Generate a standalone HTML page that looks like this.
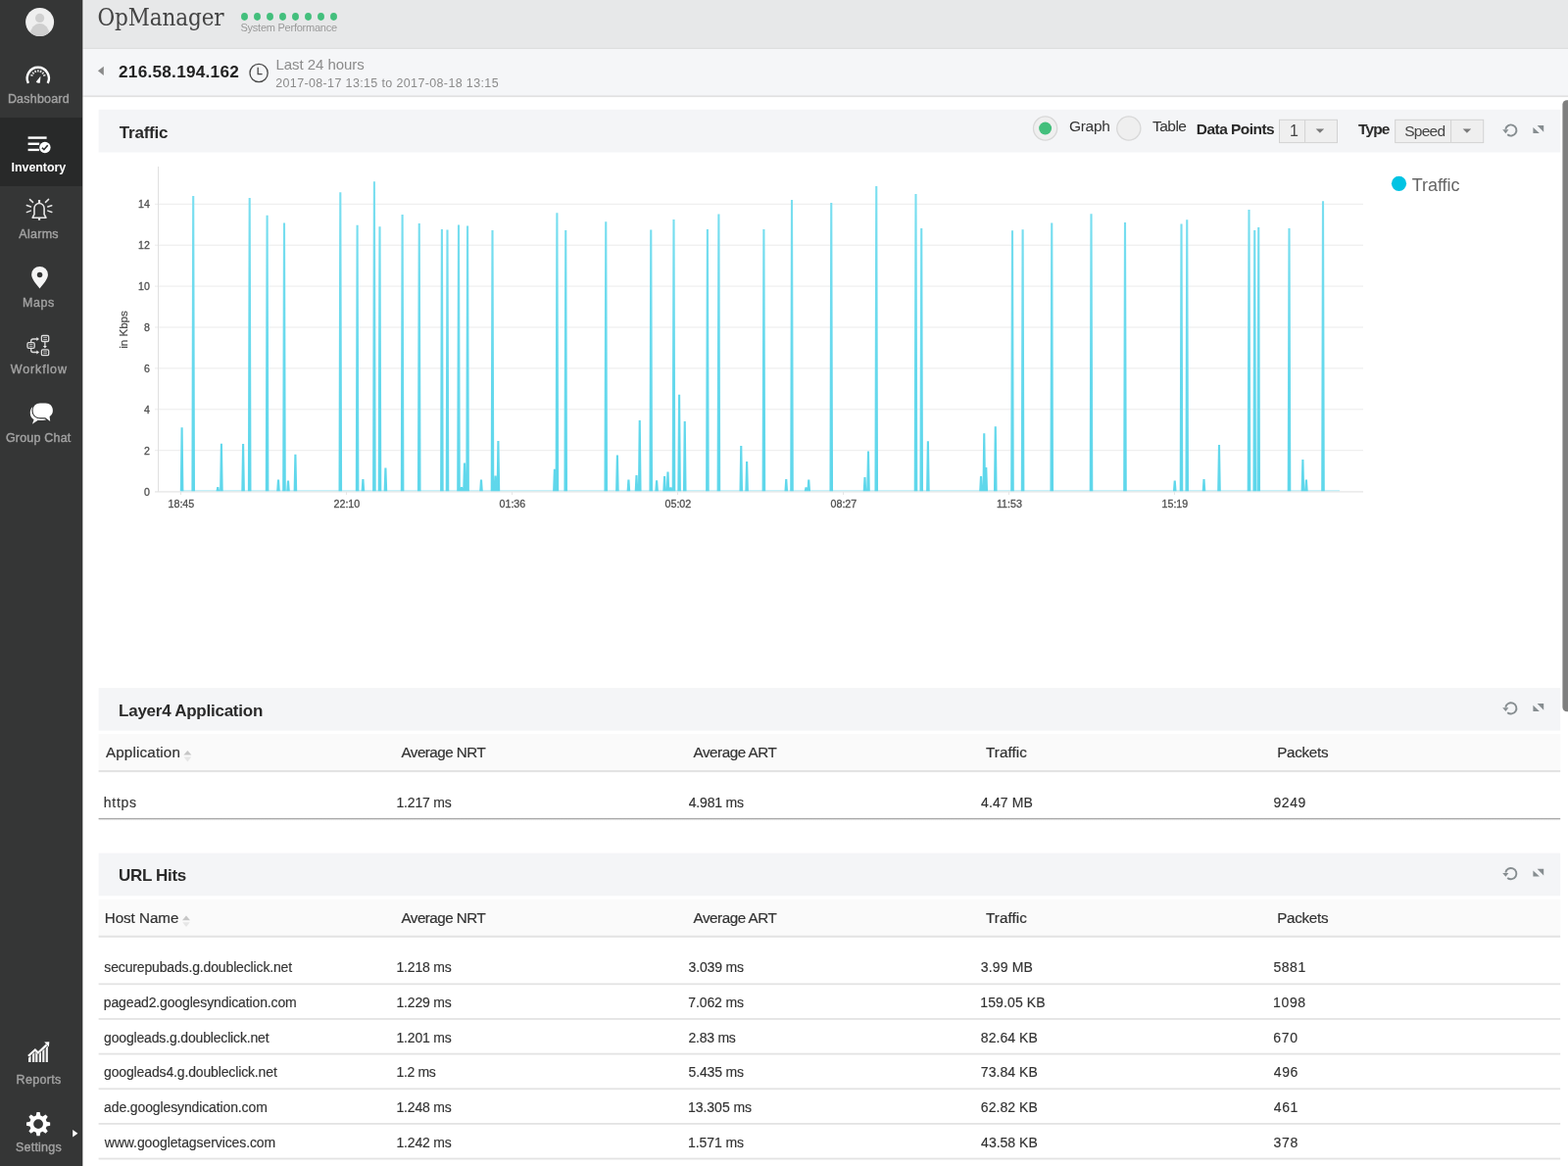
<!DOCTYPE html>
<html lang="en"><head><meta charset="utf-8"><title>OpManager</title>
<style>
*{box-sizing:border-box;margin:0;padding:0}
html,body{width:1600px;height:1190px;overflow:hidden;background:#fff}
body{will-change:transform;font-family:"Liberation Sans",Arial,sans-serif;color:#333;position:relative}
.abs{position:absolute;white-space:nowrap;line-height:1}
#side{position:absolute;left:0;top:0;width:84px;height:1190px;background:#353636}
#side .act{position:absolute;left:0;top:120px;width:84px;height:69.5px;background:#282929}

</style></head>
<body>
<div id="side">
  <div class="act"></div>
  <svg width="84" height="1190" viewBox="0 0 84 1190" style="position:absolute;left:0;top:0">
<defs><clipPath id="avc"><circle cx="40.6" cy="22.5" r="14.5"/></clipPath>
<clipPath id="repc"><polygon points="27,1085 27,1081.4 35.9,1073.6 38.9,1076.6 50,1066.6 50,1085"/></clipPath></defs>
<!-- avatar -->
<circle cx="40.6" cy="22.5" r="14.5" fill="#efefef"/>
<g clip-path="url(#avc)" fill="#cfcfcf"><circle cx="40.6" cy="18.4" r="4.6"/><ellipse cx="40.6" cy="35.5" rx="9.8" ry="11.5"/></g>
<!-- dashboard -->
<g fill="none" stroke="#fff" stroke-linecap="butt">
<path d="M28.9 84.9A11.1 11.1 0 1 1 48.7 84.9" stroke-width="2.5"/>
<g stroke="#dcdcdc" stroke-width="1.6"><path d="M33.56 77.33L31.29 76.55M34.73 75.35L32.97 73.73M36.60 74.02L35.64 71.82M38.85 73.55L38.85 71.15M41.10 74.02L42.06 71.82M42.97 75.35L44.73 73.73M44.14 77.33L46.41 76.55"/></g></g>
<path d="M36.8 83.6L41.4 77.8L40.9 84.4Q38.6 85.6 36.8 83.6Z" fill="#fff"/>
<!-- inventory -->
<g fill="#fff"><rect x="28.6" y="139.4" width="19" height="2.4"/><rect x="28.6" y="145.6" width="11.6" height="2.4"/><rect x="28.6" y="151.8" width="11.4" height="2.3"/>
<circle cx="45.9" cy="150.5" r="6.4" fill="#282929"/><circle cx="45.9" cy="150.5" r="5.7"/></g>
<path d="M42.9 150.7L44.9 152.7L48.7 148.3" fill="none" stroke="#282929" stroke-width="1.6"/>
<!-- alarms -->
<g fill="none" stroke="#e6e6e6" stroke-width="1.6">
<path d="M33.2 222.2L35 218.6L35 212.6A5.05 5.05 0 0 1 45.1 212.6L45.1 218.6L46.9 222.2Z" stroke-linejoin="round"/>
<path d="M40.05 203.9V207M40.05 223V224.8" stroke-width="2.2"/>
<g stroke-linecap="round" stroke-width="1.5"><path d="M30.5 203.6L33.5 206.4M49.6 203.4L46.5 206.4M27.3 209.5L31.4 211M52.8 209.7L48.8 211M27.3 216.6L31.3 215.1M52.8 216.5L48.8 215.1"/></g>
</g>
<!-- maps -->
<path d="M40.55 271.9A8.4 8.4 0 0 1 48.95 280.3C48.95 285 44 290 40.55 294.5C37.1 290 32.15 285 32.15 280.3A8.4 8.4 0 0 1 40.55 271.9Z" fill="#f5f5f5"/>
<circle cx="40.55" cy="280.45" r="2.75" fill="#353636"/>
<!-- workflow -->
<g fill="none" stroke="#ddd" stroke-width="1.3">
<rect x="42.4" y="342.5" width="7.3" height="6" rx="1.2"/><rect x="42.4" y="356.8" width="7.3" height="5.8" rx="1.2"/><rect x="28" y="349.7" width="7.2" height="5.6" rx="1.2"/>
<path d="M31.7 349.4V348Q31.7 346 33.7 346H38M31.7 355.6V357.4Q31.7 359.5 33.7 359.5H38M45.9 348.8V353.6"/>
<path d="M44.2 344.6H48M44.2 346.5H48M44.2 358.8H48M44.2 360.6H48M29.8 351.6H33.4M29.8 353.4H33.4" stroke-width="0.9" stroke="#bbb"/>
</g>
<g fill="#e8e8e8"><path d="M37.4 344L40 346L37.4 348Z"/><path d="M37.4 357.5L40 359.5L37.4 361.5Z"/><path d="M43.9 353L47.9 353L45.9 355.6Z"/></g>
<!-- group chat -->
<g fill="#fff">
<path d="M30.8 421.5C30.8 417 33 414.6 36 414.6L46 414.6C49 414.6 51.2 417.5 51.2 421.5C51.2 426 48 428.9 44 428.9L38.5 428.9L33 432.8L34.6 428.2C32.2 427 30.8 424.6 30.8 421.5Z"/>
<path d="M41 411.5L46.5 411.5C51 411.5 53.9 414.6 53.9 418.9C53.9 421.6 52.7 423.8 50.6 425.1L51.2 429.9L46.2 426.3L41 426.3C36.5 426.3 33.6 423.2 33.6 418.9C33.6 414.6 36.5 411.5 41 411.5Z" stroke="#353636" stroke-width="2.4"/>
<path d="M41 411.5L46.5 411.5C51 411.5 53.9 414.6 53.9 418.9C53.9 421.6 52.7 423.8 50.6 425.1L51.2 429.9L46.2 426.3L41 426.3C36.5 426.3 33.6 423.2 33.6 418.9C33.6 414.6 36.5 411.5 41 411.5Z"/>
</g>
<!-- reports -->
<path d="M28.9 1077.8L35.9 1071.5L38.9 1074.5L47.6 1066.4" fill="none" stroke="#fff" stroke-width="2.2" stroke-linejoin="miter"/>
<path d="M45.2 1063.6L50.3 1063.2L49.9 1068.4Z" fill="#fff"/>
<g fill="#f2f2f2" clip-path="url(#repc)"><rect x="29" y="1060" width="2.6" height="24"/><rect x="33" y="1060" width="2.3" height="24"/><rect x="36.2" y="1060" width="2.2" height="24"/><rect x="39.8" y="1060" width="2.2" height="24"/><rect x="43.2" y="1060" width="2.2" height="24"/><rect x="46.7" y="1060" width="2.2" height="24"/></g>
<!-- settings -->
<path id="gear" fill="#fff" fill-rule="evenodd" d="M36.78 1138.50L37.49 1135.00L40.65 1135.00L41.36 1138.50L43.53 1139.40L46.51 1137.43L48.74 1139.66L46.77 1142.64L47.67 1144.81L51.17 1145.52L51.17 1148.68L47.67 1149.39L46.77 1151.56L48.74 1154.54L46.51 1156.77L43.53 1154.80L41.36 1155.70L40.65 1159.20L37.49 1159.20L36.78 1155.70L34.61 1154.80L31.63 1156.77L29.40 1154.54L31.37 1151.56L30.47 1149.39L26.97 1148.68L26.97 1145.52L30.47 1144.81L31.37 1142.64L29.40 1139.66L31.63 1137.43L34.61 1139.40ZM34.17 1147.10a4.9 4.9 0 1 0 9.8 0a4.9 4.9 0 1 0 -9.8 0Z"/>
<path d="M74.2 1152.9L79.4 1156.7L74.2 1160.6Z" fill="#fff"/>
</svg>

</div>
<svg width="1516" height="1190" viewBox="84 0 1516 1190" style="position:absolute;left:84px;top:0">
<defs><linearGradient id="dk" x1="0" y1="0" x2="0" y2="1"><stop offset="0" stop-color="#a4a4a4"/><stop offset="0.45" stop-color="#aaaaaa"/><stop offset="0.6" stop-color="#dedede"/><stop offset="1" stop-color="#e6e6e6"/></linearGradient></defs>
<rect x="84" y="0" width="1516" height="49" fill="#e7e8e9"/>
<rect x="84" y="48.8" width="1516" height="1.2" fill="#dedfdf"/>
<rect x="84" y="50" width="1516" height="47.3" fill="#f5f6f8"/>
<rect x="84" y="97.3" width="1516" height="1.8" fill="#e1e1e1"/>
<rect x="100.6" y="111.8" width="1491.6" height="43.70" fill="#f4f5f7"/>
<rect x="100.6" y="702.1" width="1491.6" height="43.50" fill="#f4f5f7"/>
<rect x="100.6" y="870.6" width="1491.6" height="43.70" fill="#f4f5f7"/>
<rect x="100.6" y="749.0" width="1491.6" height="37.00" fill="#fafafa"/>
<rect x="100.6" y="786.0" width="1491.6" height="2.1" fill="#e3e3e3"/>
<rect x="100.6" y="917.7" width="1491.6" height="37.00" fill="#fafafa"/>
<rect x="100.6" y="954.7" width="1491.6" height="2.1" fill="#e3e3e3"/>
<rect x="100.6" y="834.9" width="1491.6" height="2.2" fill="url(#dk)"/>
<rect x="100.6" y="1003.40" width="1491.6" height="1.8" fill="#e3e3e3"/>
<rect x="100.6" y="1039.05" width="1491.6" height="1.8" fill="#e3e3e3"/>
<rect x="100.6" y="1074.70" width="1491.6" height="1.8" fill="#e3e3e3"/>
<rect x="100.6" y="1110.35" width="1491.6" height="1.8" fill="#e3e3e3"/>
<rect x="100.6" y="1146.00" width="1491.6" height="1.8" fill="#e3e3e3"/>
<rect x="100.6" y="1181.65" width="1491.6" height="1.8" fill="#e3e3e3"/>
<rect x="84.3" y="0" width="1.3" height="99" fill="#fff" fill-opacity="0.4"/>
<rect x="84" y="0" width="0.35" height="1190" fill="#353636"/>
<rect x="1594.4" y="102.2" width="12" height="624" rx="4.5" fill="#7f7f7f"/>
</svg>
<svg width="1600" height="1190" viewBox="0 0 1600 1190" style="position:absolute;left:0;top:0">
<!-- green dots -->
<g fill="#43bf7c">
<rect x="246.05" y="12.9" width="6.9" height="8" rx="3.45" ry="3.8"/><rect x="259.05" y="12.9" width="6.9" height="8" rx="3.45" ry="3.8"/><rect x="272.05" y="12.9" width="6.9" height="8" rx="3.45" ry="3.8"/><rect x="285.05" y="12.9" width="6.9" height="8" rx="3.45" ry="3.8"/><rect x="298.05" y="12.9" width="6.9" height="8" rx="3.45" ry="3.8"/><rect x="311.05" y="12.9" width="6.9" height="8" rx="3.45" ry="3.8"/><rect x="324.05" y="12.9" width="6.9" height="8" rx="3.45" ry="3.8"/><rect x="337.05" y="12.9" width="6.9" height="8" rx="3.45" ry="3.8"/>
</g>
<!-- back arrow -->
<path d="M99.9 72.3L105.8 67.7V76.9Z" fill="#8a8a8a"/>
<!-- clock -->
<circle cx="264.1" cy="74.5" r="9.1" fill="none" stroke="#4a4a4a" stroke-width="1.3"/>
<path d="M263.2 68.8V75.6H267.6" fill="none" stroke="#4a4a4a" stroke-width="1.3"/>
<!-- radios -->
<circle cx="1066.6" cy="131" r="12.1" fill="#efefef" stroke="#d8d8d8" stroke-width="1.3"/>
<circle cx="1066.6" cy="131" r="6.5" fill="#43bf7c"/>
<circle cx="1151.8" cy="131" r="12.1" fill="#efefef" stroke="#d8d8d8" stroke-width="1.3"/>
<!-- selects -->
<g fill="#efefef" stroke="#d2d2d2" stroke-width="1">
<rect x="1305.5" y="122.3" width="59" height="23.3"/>
<rect x="1423.7" y="122.3" width="90" height="23.3"/>
</g>
<path d="M1331.6 122.3V145.6M1480.6 122.3V145.6" stroke="#d2d2d2" stroke-width="1" fill="none"/>
<path d="M1342.6 131.4H1351.2L1346.9 135.8Z M1492.6 131.4H1501.2L1496.9 135.8Z" fill="#7a7a7a"/>
<!-- refresh / expand icons -->
<g>
<path d="M1536.3 131.9A5.6 5.6 0 1 1 1538.2 137.3" fill="none" stroke="#868d90" stroke-width="1.9"/>
<path d="M1533.2 132.3L1539.4 132.3L1536.4 136.2Z" fill="#868d90"/>
<path d="M1568.6 128.1H1575.2V134.8Z M1564.4 129.9V136H1570.9Z" fill="#868d90"/>
</g>
<g transform="translate(0,589.9)">
<path d="M1536.3 131.9A5.6 5.6 0 1 1 1538.2 137.3" fill="none" stroke="#868d90" stroke-width="1.9"/>
<path d="M1533.2 132.3L1539.4 132.3L1536.4 136.2Z" fill="#868d90"/>
<path d="M1568.6 128.1H1575.2V134.8Z M1564.4 129.9V136H1570.9Z" fill="#868d90"/>
</g>
<g transform="translate(0,758.6)">
<path d="M1536.3 131.9A5.6 5.6 0 1 1 1538.2 137.3" fill="none" stroke="#868d90" stroke-width="1.9"/>
<path d="M1533.2 132.3L1539.4 132.3L1536.4 136.2Z" fill="#868d90"/>
<path d="M1568.6 128.1H1575.2V134.8Z M1564.4 129.9V136H1570.9Z" fill="#868d90"/>
</g>
<!-- sort icons -->
<g fill="#c6c6c6"><path d="M187.4 770.6L191.4 765.9L195.4 770.6Z"/><path d="M187.6 772.6L191.4 777.4L195.2 772.6Z" fill="#e6e6e6"/></g>
<g fill="#c6c6c6" transform="translate(-1.4,168.7)"><path d="M187.4 770.6L191.4 765.9L195.4 770.6Z"/><path d="M187.6 772.6L191.4 777.4L195.2 772.6Z" fill="#e6e6e6"/></g>
</svg>

<svg class="chart" width="1600" height="1190" viewBox="0 0 1600 1190" style="position:absolute;left:0;top:0">
<rect x="158" y="459.20" width="1233" height="1" fill="#ebebeb"/>
<rect x="158" y="417.30" width="1233" height="1" fill="#ebebeb"/>
<rect x="158" y="375.40" width="1233" height="1" fill="#ebebeb"/>
<rect x="158" y="333.50" width="1233" height="1" fill="#ebebeb"/>
<rect x="158" y="291.60" width="1233" height="1" fill="#ebebeb"/>
<rect x="158" y="249.70" width="1233" height="1" fill="#ebebeb"/>
<rect x="158" y="207.80" width="1233" height="1" fill="#ebebeb"/>
<rect x="161" y="170" width="1" height="332" fill="#e0e0e0"/>
<rect x="158" y="501.3" width="1233" height="1.2" fill="#e4e4e4"/>
<rect x="184.0" y="502" width="1" height="3" fill="#e6e6e6"/>
<rect x="353.0" y="502" width="1" height="3" fill="#e6e6e6"/>
<rect x="522.0" y="502" width="1" height="3" fill="#e6e6e6"/>
<rect x="691.0" y="502" width="1" height="3" fill="#e6e6e6"/>
<rect x="860.0" y="502" width="1" height="3" fill="#e6e6e6"/>
<rect x="1029.0" y="502" width="1" height="3" fill="#e6e6e6"/>
<rect x="1198.0" y="502" width="1" height="3" fill="#e6e6e6"/>
<rect x="185" y="500.34999999999997" width="1182" height="0.85" fill="#a8e9f4"/>
<defs><linearGradient id="sg" gradientUnits="userSpaceOnUse" x1="0" y1="185" x2="0" y2="501"><stop offset="0" stop-color="#7cdff0"/><stop offset="0.6" stop-color="#66d9ed"/><stop offset="1" stop-color="#5fd7eb"/></linearGradient></defs>
<path d="M183.80 501.2L184.55 436.30L186.65 436.30L187.40 501.2ZM195.40 501.2L196.15 200.00L198.25 200.00L199.00 501.2ZM220.50 501.2L221.25 497.00L223.35 497.00L224.10 501.2ZM224.10 501.2L224.85 452.80L226.95 452.80L227.70 501.2ZM246.30 501.2L247.05 453.00L249.15 453.00L249.90 501.2ZM252.90 501.2L253.65 201.90L255.75 201.90L256.50 501.2ZM270.80 501.2L271.55 219.75L273.65 219.75L274.40 501.2ZM282.20 501.2L282.95 489.40L285.05 489.40L285.80 501.2ZM288.20 501.2L288.95 227.50L291.05 227.50L291.80 501.2ZM292.20 501.2L292.95 490.60L295.05 490.60L295.80 501.2ZM299.60 501.2L300.35 463.75L302.45 463.75L303.20 501.2ZM345.50 501.2L346.25 196.25L348.35 196.25L349.10 501.2ZM362.80 501.2L363.55 229.75L365.65 229.75L366.40 501.2ZM368.60 501.2L369.35 489.00L371.45 489.00L372.20 501.2ZM380.10 501.2L380.85 185.25L382.95 185.25L383.70 501.2ZM385.70 501.2L386.45 231.25L388.55 231.25L389.30 501.2ZM391.60 501.2L392.35 477.50L394.45 477.50L395.20 501.2ZM408.80 501.2L409.55 219.00L411.65 219.00L412.40 501.2ZM425.95 501.2L426.70 228.10L428.80 228.10L429.55 501.2ZM449.10 501.2L449.85 234.10L451.95 234.10L452.70 501.2ZM454.70 501.2L455.45 234.40L457.55 234.40L458.30 501.2ZM466.20 501.2L466.95 229.40L469.05 229.40L469.80 501.2ZM469.20 501.2L469.95 496.90L472.05 496.90L472.80 501.2ZM472.20 501.2L472.95 472.50L475.05 472.50L475.80 501.2ZM475.30 501.2L476.05 230.40L478.15 230.40L478.90 501.2ZM489.20 501.2L489.95 489.40L492.05 489.40L492.80 501.2ZM500.70 501.2L501.45 235.00L503.55 235.00L504.30 501.2ZM503.80 501.2L504.55 485.60L506.65 485.60L507.40 501.2ZM506.60 501.2L507.35 450.00L509.45 450.00L510.20 501.2ZM564.10 501.2L564.85 478.75L566.95 478.75L567.70 501.2ZM566.60 501.2L567.35 217.25L569.45 217.25L570.20 501.2ZM575.45 501.2L576.20 235.00L578.30 235.00L579.05 501.2ZM616.45 501.2L617.20 226.25L619.30 226.25L620.05 501.2ZM628.10 501.2L628.85 464.40L630.95 464.40L631.70 501.2ZM639.60 501.2L640.35 489.40L642.45 489.40L643.20 501.2ZM647.70 501.2L648.45 485.00L650.55 485.00L651.30 501.2ZM650.95 501.2L651.70 429.10L653.80 429.10L654.55 501.2ZM662.45 501.2L663.20 234.60L665.30 234.60L666.05 501.2ZM668.30 501.2L669.05 490.25L671.15 490.25L671.90 501.2ZM676.30 501.2L677.05 486.00L679.15 486.00L679.90 501.2ZM679.70 501.2L680.45 481.50L682.55 481.50L683.30 501.2ZM682.60 501.2L683.35 497.25L685.45 497.25L686.20 501.2ZM685.70 501.2L686.45 224.00L688.55 224.00L689.30 501.2ZM691.30 501.2L692.05 402.75L694.15 402.75L694.90 501.2ZM696.95 501.2L697.70 430.00L699.80 430.00L700.55 501.2ZM720.10 501.2L720.85 234.10L722.95 234.10L723.70 501.2ZM731.60 501.2L732.35 218.50L734.45 218.50L735.20 501.2ZM754.45 501.2L755.20 455.00L757.30 455.00L758.05 501.2ZM760.30 501.2L761.05 471.00L763.15 471.00L763.90 501.2ZM777.60 501.2L778.35 234.00L780.45 234.00L781.20 501.2ZM800.45 501.2L801.20 489.00L803.30 489.00L804.05 501.2ZM806.20 501.2L806.95 204.00L809.05 204.00L809.80 501.2ZM820.70 501.2L821.45 497.25L823.55 497.25L824.30 501.2ZM823.45 501.2L824.20 489.40L826.30 489.40L827.05 501.2ZM846.45 501.2L847.20 206.90L849.30 206.90L850.05 501.2ZM880.70 501.2L881.45 487.10L883.55 487.10L884.30 501.2ZM884.20 501.2L884.95 460.40L887.05 460.40L887.80 501.2ZM892.45 501.2L893.20 190.00L895.30 190.00L896.05 501.2ZM932.70 501.2L933.45 198.10L935.55 198.10L936.30 501.2ZM938.45 501.2L939.20 232.90L941.30 232.90L942.05 501.2ZM945.10 501.2L945.85 450.25L947.95 450.25L948.70 501.2ZM999.20 501.2L999.95 486.00L1002.05 486.00L1002.80 501.2ZM1002.45 501.2L1003.20 442.25L1005.30 442.25L1006.05 501.2ZM1004.45 501.2L1005.20 476.90L1007.30 476.90L1008.05 501.2ZM1013.95 501.2L1014.70 435.25L1016.80 435.25L1017.55 501.2ZM1031.20 501.2L1031.95 235.25L1034.05 235.25L1034.80 501.2ZM1041.80 501.2L1042.55 234.25L1044.65 234.25L1045.40 501.2ZM1071.45 501.2L1072.20 227.50L1074.30 227.50L1075.05 501.2ZM1111.70 501.2L1112.45 218.25L1114.55 218.25L1115.30 501.2ZM1146.20 501.2L1146.95 227.10L1149.05 227.10L1149.80 501.2ZM1196.95 501.2L1197.70 490.60L1199.80 490.60L1200.55 501.2ZM1203.70 501.2L1204.45 228.50L1206.55 228.50L1207.30 501.2ZM1209.45 501.2L1210.20 224.25L1212.30 224.25L1213.05 501.2ZM1226.70 501.2L1227.45 489.00L1229.55 489.00L1230.30 501.2ZM1242.20 501.2L1242.95 454.00L1245.05 454.00L1245.80 501.2ZM1272.70 501.2L1273.45 214.00L1275.55 214.00L1276.30 501.2ZM1278.45 501.2L1279.20 235.10L1281.30 235.10L1282.05 501.2ZM1282.45 501.2L1283.20 232.10L1285.30 232.10L1286.05 501.2ZM1313.70 501.2L1314.45 232.90L1316.55 232.90L1317.30 501.2ZM1327.60 501.2L1328.35 469.10L1330.45 469.10L1331.20 501.2ZM1331.10 501.2L1331.85 489.40L1333.95 489.40L1334.70 501.2ZM1348.20 501.2L1348.95 205.25L1351.05 205.25L1351.80 501.2Z" fill="url(#sg)"/>
<text x="152.8" y="505.5" text-anchor="end" font-family='"Liberation Sans",Arial,sans-serif' font-size="10.6" fill="#505050" stroke="#505050" stroke-width="0.3">0</text>
<text x="152.8" y="463.6" text-anchor="end" font-family='"Liberation Sans",Arial,sans-serif' font-size="10.6" fill="#505050" stroke="#505050" stroke-width="0.3">2</text>
<text x="152.8" y="421.7" text-anchor="end" font-family='"Liberation Sans",Arial,sans-serif' font-size="10.6" fill="#505050" stroke="#505050" stroke-width="0.3">4</text>
<text x="152.8" y="379.8" text-anchor="end" font-family='"Liberation Sans",Arial,sans-serif' font-size="10.6" fill="#505050" stroke="#505050" stroke-width="0.3">6</text>
<text x="152.8" y="337.9" text-anchor="end" font-family='"Liberation Sans",Arial,sans-serif' font-size="10.6" fill="#505050" stroke="#505050" stroke-width="0.3">8</text>
<text x="152.8" y="296.0" text-anchor="end" font-family='"Liberation Sans",Arial,sans-serif' font-size="10.6" fill="#505050" stroke="#505050" stroke-width="0.3">10</text>
<text x="152.8" y="254.1" text-anchor="end" font-family='"Liberation Sans",Arial,sans-serif' font-size="10.6" fill="#505050" stroke="#505050" stroke-width="0.3">12</text>
<text x="152.8" y="212.2" text-anchor="end" font-family='"Liberation Sans",Arial,sans-serif' font-size="10.6" fill="#505050" stroke="#505050" stroke-width="0.3">14</text>
<text x="184.9" y="518" text-anchor="middle" font-family='"Liberation Sans",Arial,sans-serif' font-size="10.7" fill="#505050" stroke="#505050" stroke-width="0.3">18:45</text>
<text x="353.9" y="518" text-anchor="middle" font-family='"Liberation Sans",Arial,sans-serif' font-size="10.7" fill="#505050" stroke="#505050" stroke-width="0.3">22:10</text>
<text x="522.9" y="518" text-anchor="middle" font-family='"Liberation Sans",Arial,sans-serif' font-size="10.7" fill="#505050" stroke="#505050" stroke-width="0.3">01:36</text>
<text x="691.9" y="518" text-anchor="middle" font-family='"Liberation Sans",Arial,sans-serif' font-size="10.7" fill="#505050" stroke="#505050" stroke-width="0.3">05:02</text>
<text x="860.9" y="518" text-anchor="middle" font-family='"Liberation Sans",Arial,sans-serif' font-size="10.7" fill="#505050" stroke="#505050" stroke-width="0.3">08:27</text>
<text x="1029.9" y="518" text-anchor="middle" font-family='"Liberation Sans",Arial,sans-serif' font-size="10.7" fill="#505050" stroke="#505050" stroke-width="0.3">11:53</text>
<text x="1198.9" y="518" text-anchor="middle" font-family='"Liberation Sans",Arial,sans-serif' font-size="10.7" fill="#505050" stroke="#505050" stroke-width="0.3">15:19</text>
<text transform="translate(130.3,336.5) rotate(-90)" text-anchor="middle" font-family='"Liberation Sans",Arial,sans-serif' font-size="11.6" fill="#505050" stroke="#505050" stroke-width="0.25">in Kbps</text>
<circle cx="1427.5" cy="187.3" r="7.6" fill="#00c3e3"/>
</svg>
<div class="abs" id="t_op" style="left:99.40px;top:6px;font-size:24px;letter-spacing:-0.112px;font-family:'DejaVu Serif Condensed','DejaVu Serif','Liberation Serif',serif;color:#444;">OpManager</div>
<div class="abs" id="t_sp" style="left:245.50px;top:23px;font-size:11px;letter-spacing:-0.247px;color:#9a9a9a;">System Performance</div>
<div class="abs" id="t_ip" style="left:121.05px;top:65px;font-size:17.2px;letter-spacing:0.250px;font-weight:bold;color:#222;">216.58.194.162</div>
<div class="abs" id="t_l24" style="left:281.55px;top:58px;font-size:15px;letter-spacing:-0.066px;color:#8b8b8b;">Last 24 hours</div>
<div class="abs" id="t_dt" style="left:281.20px;top:79px;font-size:12.5px;letter-spacing:0.361px;color:#8b8b8b;">2017-08-17 13:15 to 2017-08-18 13:15</div>
<div class="abs" id="s_dash" style="left:7.90px;top:95px;font-size:12.5px;letter-spacing:0.206px;color:#a2a2a2;-webkit-text-stroke:0.4px #a2a2a2;">Dashboard</div>
<div class="abs" id="s_inv" style="left:11.60px;top:165px;font-size:12.5px;letter-spacing:-0.087px;color:#fff;font-weight:bold;">Inventory</div>
<div class="abs" id="s_al" style="left:19.25px;top:233px;font-size:12.5px;letter-spacing:0.290px;color:#a2a2a2;-webkit-text-stroke:0.4px #a2a2a2;">Alarms</div>
<div class="abs" id="s_map" style="left:23.05px;top:303px;font-size:12.5px;letter-spacing:0.583px;color:#a2a2a2;-webkit-text-stroke:0.4px #a2a2a2;">Maps</div>
<div class="abs" id="s_wf" style="left:10.80px;top:371px;font-size:12.5px;letter-spacing:0.850px;color:#a2a2a2;-webkit-text-stroke:0.4px #a2a2a2;">Workflow</div>
<div class="abs" id="s_gc" style="left:5.90px;top:441px;font-size:12.5px;letter-spacing:0.200px;color:#a2a2a2;-webkit-text-stroke:0.4px #a2a2a2;">Group Chat</div>
<div class="abs" id="s_rep" style="left:16.55px;top:1096px;font-size:12.5px;letter-spacing:0.325px;color:#a2a2a2;-webkit-text-stroke:0.4px #a2a2a2;">Reports</div>
<div class="abs" id="s_set" style="left:15.95px;top:1165px;font-size:12.5px;letter-spacing:0.235px;color:#a2a2a2;-webkit-text-stroke:0.4px #a2a2a2;">Settings</div>
<div class="abs" id="p_tr" style="left:121.75px;top:127px;font-size:17px;letter-spacing:-0.208px;font-weight:bold;color:#2a2a2a;">Traffic</div>
<div class="abs" id="p_l4" style="left:121.05px;top:717px;font-size:17px;letter-spacing:-0.250px;font-weight:bold;color:#2a2a2a;">Layer4 Application</div>
<div class="abs" id="p_url" style="left:121.05px;top:885px;font-size:17px;letter-spacing:-0.336px;font-weight:bold;color:#2a2a2a;">URL Hits</div>
<div class="abs" id="c_graph" style="left:1090.90px;top:121px;font-size:15.5px;letter-spacing:-0.262px;color:#333;">Graph</div>
<div class="abs" id="c_table" style="left:1175.95px;top:121px;font-size:15.5px;letter-spacing:-0.500px;color:#333;">Table</div>
<div class="abs" id="c_dp" style="left:1220.85px;top:124px;font-size:15.5px;letter-spacing:-0.545px;font-weight:bold;color:#2a2a2a;">Data Points</div>
<div class="abs" id="c_1" style="left:1316.05px;top:126px;font-size:16px;color:#444;">1</div>
<div class="abs" id="c_type" style="left:1386.05px;top:124px;font-size:15.5px;letter-spacing:-0.866px;font-weight:bold;color:#2a2a2a;">Type</div>
<div class="abs" id="c_speed" style="left:1433.25px;top:126px;font-size:15.5px;letter-spacing:-0.750px;color:#444;">Speed</div>
<div class="abs" id="c_leg" style="left:1440.80px;top:180px;font-size:18px;letter-spacing:-0.059px;color:#666;">Traffic</div>
<div class="abs" id="h1a" style="left:107.95px;top:760px;font-size:15.2px;letter-spacing:0.170px;color:#333;-webkit-text-stroke:0.2px #333;">Application</div>
<div class="abs" id="h1b" style="left:409.50px;top:760px;font-size:15.2px;letter-spacing:-0.525px;color:#333;-webkit-text-stroke:0.2px #333;">Average NRT</div>
<div class="abs" id="h1c" style="left:707.50px;top:760px;font-size:15.2px;letter-spacing:-0.450px;color:#333;-webkit-text-stroke:0.2px #333;">Average ART</div>
<div class="abs" id="h1d" style="left:1006.05px;top:760px;font-size:15.2px;letter-spacing:0.067px;color:#333;-webkit-text-stroke:0.2px #333;">Traffic</div>
<div class="abs" id="h1e" style="left:1303.25px;top:760px;font-size:15.2px;letter-spacing:-0.292px;color:#333;-webkit-text-stroke:0.2px #333;">Packets</div>
<div class="abs" id="h2a" style="left:106.70px;top:929px;font-size:15.2px;letter-spacing:-0.025px;color:#333;-webkit-text-stroke:0.2px #333;">Host Name</div>
<div class="abs" id="h2b" style="left:409.50px;top:929px;font-size:15.2px;letter-spacing:-0.525px;color:#333;-webkit-text-stroke:0.2px #333;">Average NRT</div>
<div class="abs" id="h2c" style="left:707.50px;top:929px;font-size:15.2px;letter-spacing:-0.450px;color:#333;-webkit-text-stroke:0.2px #333;">Average ART</div>
<div class="abs" id="h2d" style="left:1006.05px;top:929px;font-size:15.2px;letter-spacing:0.067px;color:#333;-webkit-text-stroke:0.2px #333;">Traffic</div>
<div class="abs" id="h2e" style="left:1303.25px;top:929px;font-size:15.2px;letter-spacing:-0.292px;color:#333;-webkit-text-stroke:0.2px #333;">Packets</div>
<div class="abs" id="r0a" style="left:105.80px;top:812px;font-size:14px;letter-spacing:0.736px;color:#333;-webkit-text-stroke:0.15px #333;">https</div>
<div class="abs" id="r0b" style="left:404.50px;top:812px;font-size:14px;letter-spacing:-0.179px;color:#333;-webkit-text-stroke:0.15px #333;">1.217 ms</div>
<div class="abs" id="r0c" style="left:702.75px;top:812px;font-size:14px;letter-spacing:-0.179px;color:#333;-webkit-text-stroke:0.15px #333;">4.981 ms</div>
<div class="abs" id="r0d" style="left:1001.10px;top:812px;font-size:14px;letter-spacing:0.092px;color:#333;-webkit-text-stroke:0.15px #333;">4.47 MB</div>
<div class="abs" id="r0e" style="left:1299.50px;top:812px;font-size:14px;letter-spacing:0.583px;color:#333;-webkit-text-stroke:0.15px #333;">9249</div>
<div class="abs" id="r1a" style="left:106.30px;top:980px;font-size:14px;letter-spacing:-0.148px;color:#333;-webkit-text-stroke:0.15px #333;">securepubads.g.doubleclick.net</div>
<div class="abs" id="r1b" style="left:404.50px;top:980px;font-size:14px;letter-spacing:-0.179px;color:#333;-webkit-text-stroke:0.15px #333;">1.218 ms</div>
<div class="abs" id="r1c" style="left:702.50px;top:980px;font-size:14px;letter-spacing:-0.143px;color:#333;-webkit-text-stroke:0.15px #333;">3.039 ms</div>
<div class="abs" id="r1d" style="left:1000.85px;top:980px;font-size:14px;letter-spacing:0.134px;color:#333;-webkit-text-stroke:0.15px #333;">3.99 MB</div>
<div class="abs" id="r1e" style="left:1299.50px;top:980px;font-size:14px;letter-spacing:0.516px;color:#333;-webkit-text-stroke:0.15px #333;">5881</div>
<div class="abs" id="r2a" style="left:105.80px;top:1016px;font-size:14px;letter-spacing:-0.140px;color:#333;-webkit-text-stroke:0.15px #333;">pagead2.googlesyndication.com</div>
<div class="abs" id="r2b" style="left:404.50px;top:1016px;font-size:14px;letter-spacing:-0.179px;color:#333;-webkit-text-stroke:0.15px #333;">1.229 ms</div>
<div class="abs" id="r2c" style="left:702.25px;top:1016px;font-size:14px;letter-spacing:-0.107px;color:#333;-webkit-text-stroke:0.15px #333;">7.062 ms</div>
<div class="abs" id="r2d" style="left:1000.35px;top:1016px;font-size:14px;letter-spacing:0.101px;color:#333;-webkit-text-stroke:0.15px #333;">159.05 KB</div>
<div class="abs" id="r2e" style="left:1299.00px;top:1016px;font-size:14px;letter-spacing:0.667px;color:#333;-webkit-text-stroke:0.15px #333;">1098</div>
<div class="abs" id="r3a" style="left:106.05px;top:1052px;font-size:14px;letter-spacing:-0.163px;color:#333;-webkit-text-stroke:0.15px #333;">googleads.g.doubleclick.net</div>
<div class="abs" id="r3b" style="left:404.50px;top:1052px;font-size:14px;letter-spacing:-0.179px;color:#333;-webkit-text-stroke:0.15px #333;">1.201 ms</div>
<div class="abs" id="r3c" style="left:702.50px;top:1052px;font-size:14px;letter-spacing:-0.250px;color:#333;-webkit-text-stroke:0.15px #333;">2.83 ms</div>
<div class="abs" id="r3d" style="left:1000.85px;top:1052px;font-size:14px;letter-spacing:0.043px;color:#333;-webkit-text-stroke:0.15px #333;">82.64 KB</div>
<div class="abs" id="r3e" style="left:1299.25px;top:1052px;font-size:14px;letter-spacing:0.750px;color:#333;-webkit-text-stroke:0.15px #333;">670</div>
<div class="abs" id="r4a" style="left:106.05px;top:1087px;font-size:14px;letter-spacing:-0.142px;color:#333;-webkit-text-stroke:0.15px #333;">googleads4.g.doubleclick.net</div>
<div class="abs" id="r4b" style="left:404.50px;top:1087px;font-size:14px;letter-spacing:-0.350px;color:#333;-webkit-text-stroke:0.15px #333;">1.2 ms</div>
<div class="abs" id="r4c" style="left:702.50px;top:1087px;font-size:14px;letter-spacing:-0.143px;color:#333;-webkit-text-stroke:0.15px #333;">5.435 ms</div>
<div class="abs" id="r4d" style="left:1000.85px;top:1087px;font-size:14px;letter-spacing:0.043px;color:#333;-webkit-text-stroke:0.15px #333;">73.84 KB</div>
<div class="abs" id="r4e" style="left:1299.75px;top:1087px;font-size:14px;letter-spacing:0.625px;color:#333;-webkit-text-stroke:0.15px #333;">496</div>
<div class="abs" id="r5a" style="left:106.05px;top:1123px;font-size:14px;letter-spacing:-0.121px;color:#333;-webkit-text-stroke:0.15px #333;">ade.googlesyndication.com</div>
<div class="abs" id="r5b" style="left:404.50px;top:1123px;font-size:14px;letter-spacing:-0.179px;color:#333;-webkit-text-stroke:0.15px #333;">1.248 ms</div>
<div class="abs" id="r5c" style="left:702.00px;top:1123px;font-size:14px;letter-spacing:-0.031px;color:#333;-webkit-text-stroke:0.15px #333;">13.305 ms</div>
<div class="abs" id="r5d" style="left:1000.85px;top:1123px;font-size:14px;letter-spacing:0.043px;color:#333;-webkit-text-stroke:0.15px #333;">62.82 KB</div>
<div class="abs" id="r5e" style="left:1299.75px;top:1123px;font-size:14px;letter-spacing:0.625px;color:#333;-webkit-text-stroke:0.15px #333;">461</div>
<div class="abs" id="r6a" style="left:106.80px;top:1159px;font-size:14px;letter-spacing:-0.092px;color:#333;-webkit-text-stroke:0.15px #333;">www.googletagservices.com</div>
<div class="abs" id="r6b" style="left:404.50px;top:1159px;font-size:14px;letter-spacing:-0.179px;color:#333;-webkit-text-stroke:0.15px #333;">1.242 ms</div>
<div class="abs" id="r6c" style="left:702.00px;top:1159px;font-size:14px;letter-spacing:-0.071px;color:#333;-webkit-text-stroke:0.15px #333;">1.571 ms</div>
<div class="abs" id="r6d" style="left:1001.10px;top:1159px;font-size:14px;letter-spacing:0.007px;color:#333;-webkit-text-stroke:0.15px #333;">43.58 KB</div>
<div class="abs" id="r6e" style="left:1299.50px;top:1159px;font-size:14px;letter-spacing:0.750px;color:#333;-webkit-text-stroke:0.15px #333;">378</div>
</body></html>
